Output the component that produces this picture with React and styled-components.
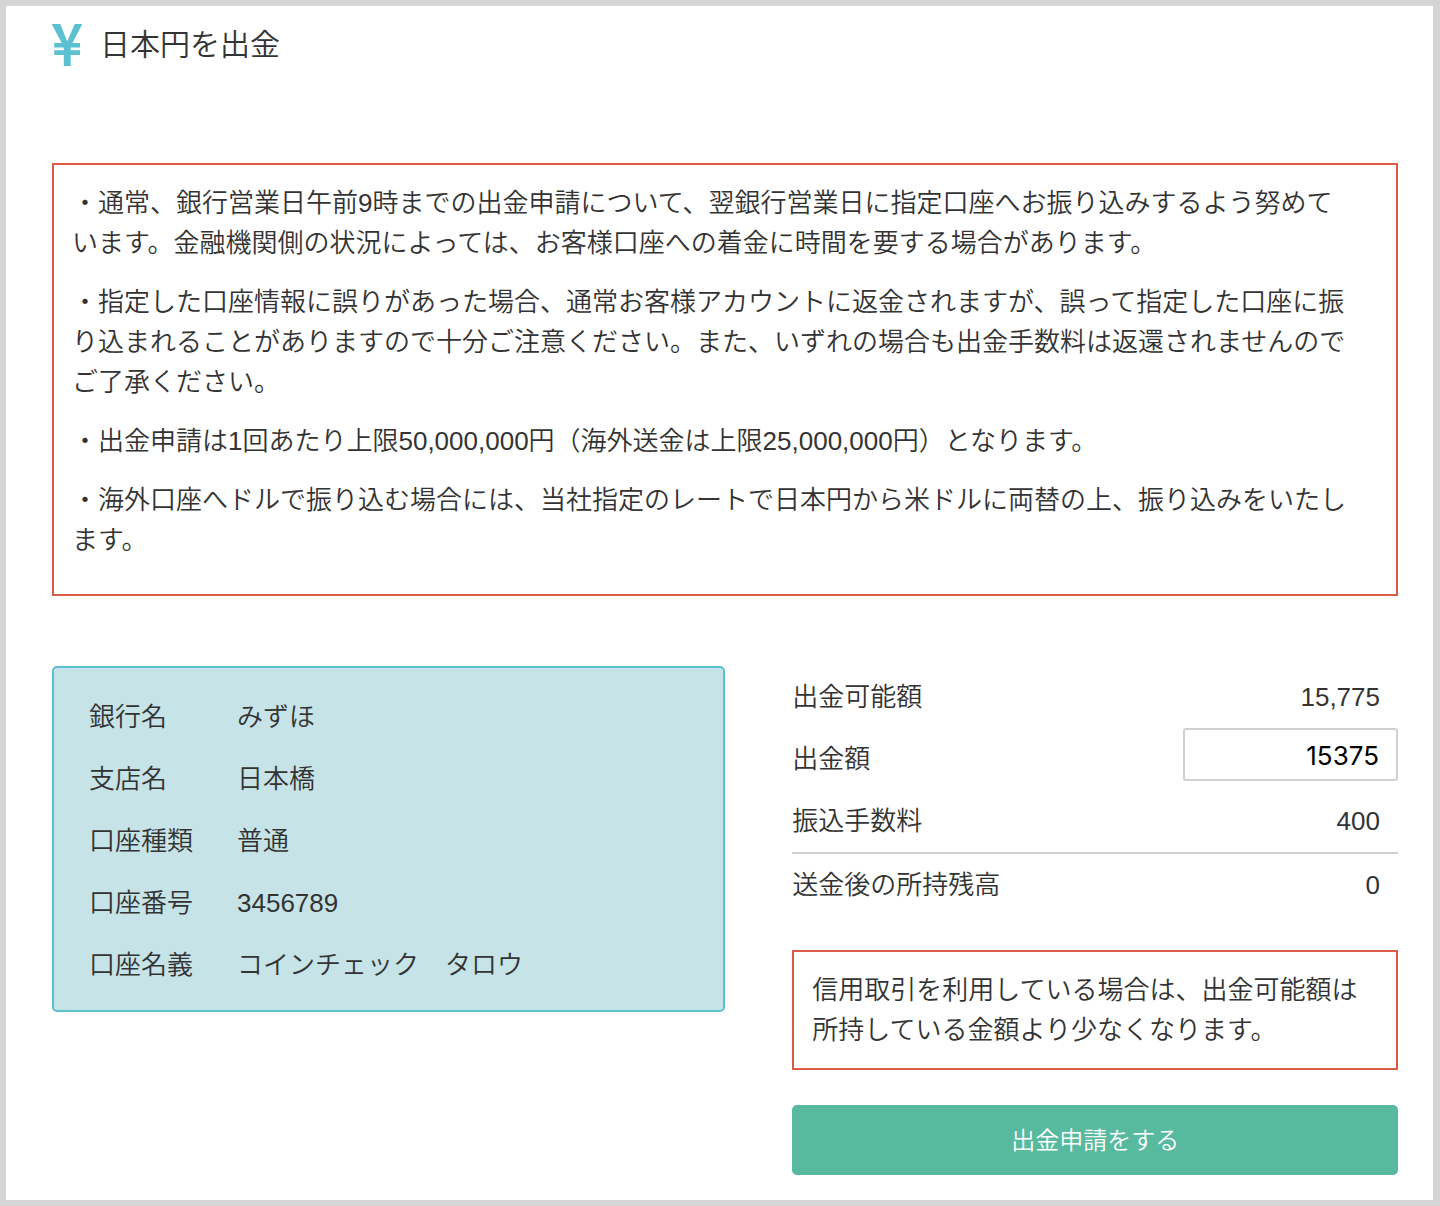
import React, { useState } from "react";
import styled, { createGlobalStyle } from "styled-components";

const GlobalStyle = createGlobalStyle`
  * {
    box-sizing: border-box;
  }
  body {
    margin: 0;
    background-color: #fff;
    color: #333;
    font-family: "Liberation Sans", "Noto Sans CJK JP", sans-serif;
    font-size: 26px;
    font-weight: 350;
    line-height: 40px;
  }
`;

const Page = styled.main`
  min-height: 100vh;
  padding: 18px 35px 25px 46px;
  border: 6px solid #d5d5d5;
  border-right-width: 7px;
`;

const PageHeader = styled.header`
  display: flex;
  align-items: center;
  gap: 18px;
  margin-bottom: 97px;
  svg {
    flex: none;
  }
  h1 {
    margin: 0;
    font-size: 30px;
    font-weight: 350;
  }
`;

const Notice = styled.section`
  padding: 18px;
  border: 2px solid #dd5a46;
  p {
    margin: 0;
  }
`;

const Guide = styled(Notice)`
  padding: 18px 42px 15px 18px;
  p {
    margin-bottom: 19px;
  }
`;

const Columns = styled.div`
  display: grid;
  grid-template-columns: 50fr 45fr;
  column-gap: 5%;
  align-items: start;
  margin-top: 70px;
`;

const BankCard = styled.div`
  padding: 18px 35px 14px;
  border: 2px solid #5bc0d0;
  border-radius: 5px;
  background-color: #c6e3e7;
`;

const BankTable = styled.table`
  width: 100%;
  border-collapse: collapse;
  th,
  td {
    height: 62px;
    padding: 0;
    font-weight: 350;
    text-align: left;
  }
  th {
    width: 148px;
  }
`;

const AmountRow = styled.div`
  display: flex;
  justify-content: space-between;
  height: 62px;
  label,
  output {
    line-height: 62px;
  }
  output {
    padding-right: 18px;
  }
`;

const Total = styled.div`
  border-top: 2px solid #d0d0d0;
  margin-bottom: 34px;
`;

const AmountInput = styled.input`
  width: 215px;
  height: 53px;
  padding: 2px 17px 0;
  border: 2px solid #d0d0d0;
  border-radius: 3px;
  background-color: #fff;
  color: #000;
  font-family: Inter, sans-serif;
  font-size: 26px;
  text-align: right;
`;

const SubmitButton = styled.button`
  display: block;
  width: 100%;
  height: 70px;
  margin-top: 35px;
  padding: 0 0 4px;
  border: none;
  border-radius: 5px;
  background-color: #57b99d;
  color: #fff;
  font-family: inherit;
  font-size: 24px;
  font-weight: 350;
  cursor: pointer;
`;

const account = [
  ["銀行名", "みずほ"],
  ["支店名", "日本橋"],
  ["口座種類", "普通"],
  ["口座番号", "3456789"],
  ["口座名義", "コインチェック　タロウ"]
];

const YenIcon = () => (
  <svg width="30" height="42" viewBox="0 0 30 42" fill="#5bc0d0" aria-hidden="true">
    <path d="M0.500 0H7.500Q8.300 0 8.600 0.800L15.200 17.500L22.400 0.800Q22.700 0 23.500 0H29.500Q30.300 0 29.900 0.800L20.500 19H27.500Q28 19 28 19.500V22.900Q28 23.400 27.500 23.400H18.700V26.300H27.500Q28 26.300 28 26.800V30.500Q28 31 27.500 31H18.700V41.500Q18.700 42 18.200 42H12.300Q11.800 42 11.800 41.500V31H2.700Q2.200 31 2.200 30.500V26.800Q2.200 26.300 2.700 26.300H11.800V23.400H2.700Q2.200 23.400 2.200 22.900V19.500Q2.200 19 2.700 19H9.700L0.100 0.800Q-0.200 0 0.500 0Z" />
  </svg>
);

const App = () => {
  const [amount, setAmount] = useState("15375");

  return (
    <Page>
      <GlobalStyle />
      <PageHeader>
        <YenIcon />
        <h1>日本円を出金</h1>
      </PageHeader>

      <Guide>
        <p>
          ・通常、銀行営業日午前9時までの出金申請について、翌銀行営業日に指定口座へお振り込みするよう努めています。金融機関側の状況によっては、お客様口座への着金に時間を要する場合があります。
        </p>
        <p>
          ・指定した口座情報に誤りがあった場合、通常お客様アカウントに返金されますが、誤って指定した口座に振り込まれることがありますので十分ご注意ください。また、いずれの場合も出金手数料は返還されませんのでご了承ください。
        </p>
        <p>
          ・出金申請は1回あたり上限50,000,000円（海外送金は上限25,000,000円）となります。
        </p>
        <p>
          ・海外口座へドルで振り込む場合には、当社指定のレートで日本円から米ドルに両替の上、振り込みをいたします。
        </p>
      </Guide>

      <Columns>
        <BankCard>
          <BankTable>
            <tbody>
              {account.map(([name, value]) => (
                <tr key={name}>
                  <th scope="row">{name}</th>
                  <td>{value}</td>
                </tr>
              ))}
            </tbody>
          </BankTable>
        </BankCard>

        <form onSubmit={e => e.preventDefault()}>
          <AmountRow>
            <label htmlFor="available">出金可能額</label>
            <output id="available">15,775</output>
          </AmountRow>
          <AmountRow>
            <label htmlFor="amount">出金額</label>
            <AmountInput
              id="amount"
              type="text"
              inputMode="numeric"
              value={amount}
              onChange={e => setAmount(e.target.value)}
            />
          </AmountRow>
          <AmountRow>
            <label htmlFor="fee">振込手数料</label>
            <output id="fee">400</output>
          </AmountRow>
          <Total>
            <AmountRow>
              <label htmlFor="balance">送金後の所持残高</label>
              <output id="balance">0</output>
            </AmountRow>
          </Total>
          <Notice>
            <p>
              信用取引を利用している場合は、出金可能額は所持している金額より少なくなります。
            </p>
          </Notice>
          <SubmitButton type="submit">出金申請をする</SubmitButton>
        </form>
      </Columns>
    </Page>
  );
};

export default App;
